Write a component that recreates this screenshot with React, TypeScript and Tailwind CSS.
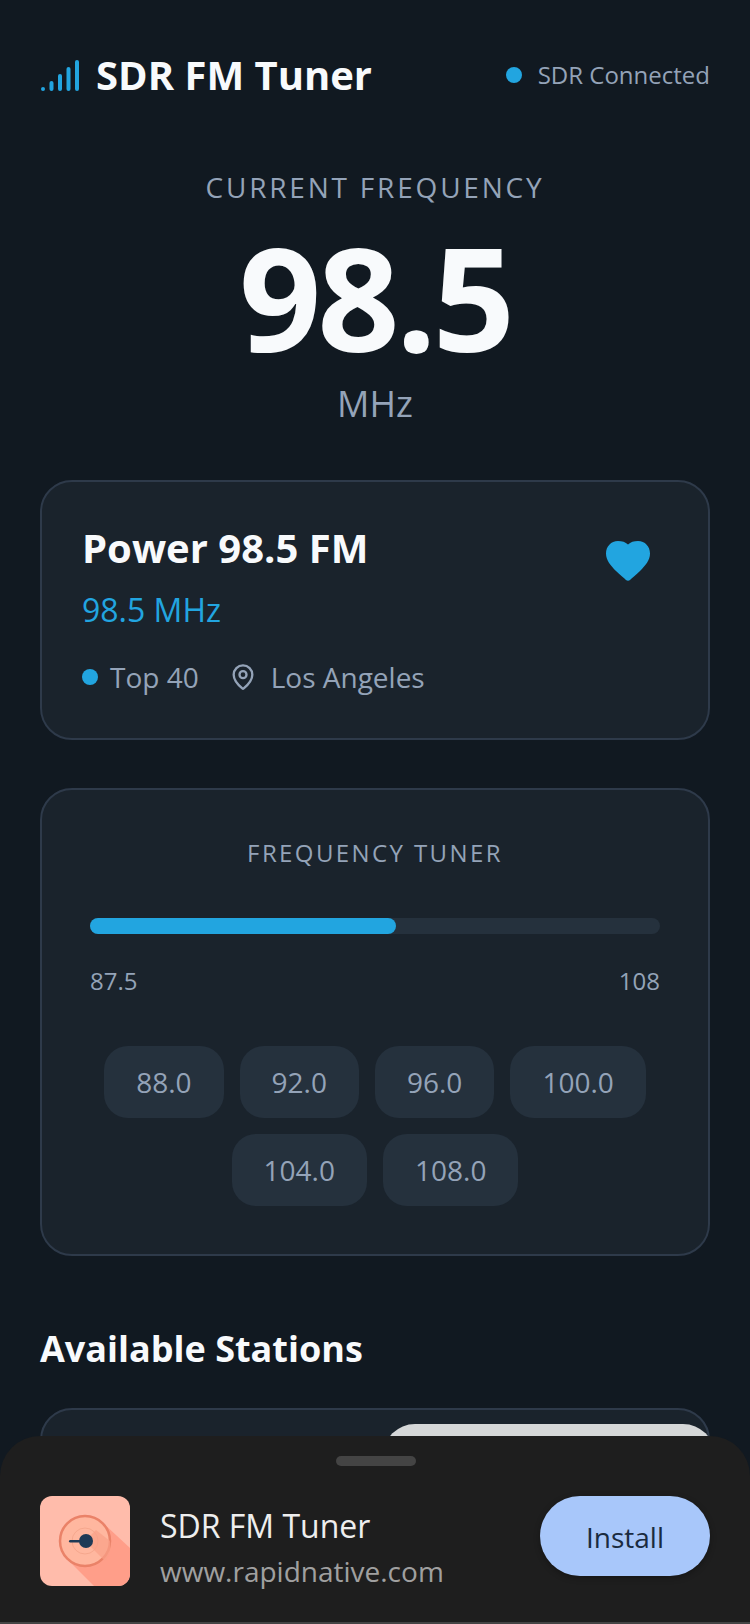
import { MapPin } from 'lucide-react'

const PRESETS_TOP = ['88.0', '92.0', '96.0', '100.0']
const PRESETS_BOTTOM = ['104.0', '108.0']

function SignalLogo() {
  return (
    <svg width="40" height="32" viewBox="0 0 40 32" className="shrink-0" fill="#22a5e0">
      <rect x="1" y="28" width="4" height="4" rx="2" />
      <rect x="9.5" y="22" width="4" height="10" rx="2" />
      <rect x="18" y="15" width="4" height="17" rx="2" />
      <rect x="26.5" y="8" width="4" height="24" rx="2" />
      <rect x="35" y="1" width="4" height="31" rx="2" />
    </svg>
  )
}

function Heart() {
  return (
    <svg width="44" height="40" viewBox="0 0 44 40" fill="#22a5e0">
      <path d="M22 3.5 C24.5 1 28 0 32 0 C39 0 44 5.5 44 12.5 C44 19 39.5 24.5 34 30 C30 34 26 37 24 39 C23 40 21 40 20 39 C18 37 14 34 10 30 C4.5 24.5 0 19 0 12.5 C0 5.5 5 0 12 0 C16 0 19.5 1 22 3.5 Z" />
    </svg>
  )
}

function AppIcon() {
  return (
    <svg width="90" height="90" viewBox="0 0 90 90" className="rounded-[12px] shrink-0">
      <rect width="90" height="90" fill="#ffbcab" />
      <path d="M27 63 L54 90 L90 90 L90 52 L63 27 Z" fill="#ff9e89" />
      <circle cx="45" cy="45" r="25" fill="#ffb79f" stroke="#ea8268" strokeWidth="2.5" />
      <circle cx="45" cy="45" r="13" fill="none" stroke="#f2a287" strokeWidth="0.75" />
      <path d="M45 45 L65 65 A 25 25 0 0 0 70 45 L56 34 Z" fill="#f9a088" opacity="0.7" />
      <circle cx="46" cy="45" r="7" fill="#1f3a56" />
      <rect x="29" y="44" width="12" height="2.5" rx="1.2" fill="#1f3a56" />
    </svg>
  )
}

function Preset({ label }: { label: string }) {
  return (
    <div className="h-[72px] px-[32px] flex items-center justify-center rounded-[24px] bg-[#25313d] text-[28px] text-[#94a3b8]">
      {label}
    </div>
  )
}

export default function App() {
  return (
    <div className="relative h-[1624px] w-[750px] overflow-hidden bg-[#111921] font-['Open_Sans',sans-serif]">
      <div className="px-10 pt-[47px]">
        <div className="flex items-center justify-between h-[56px]">
          <div className="flex items-center gap-4">
            <SignalLogo />
            <h1 className="text-[40px] leading-[56px] font-bold text-[#f8fafc]">SDR FM Tuner</h1>
          </div>
          <div className="flex items-center gap-4">
            <span className="w-4 h-4 rounded-full bg-[#22a5e0]" />
            <span className="text-[24px] text-[#94a3b8]">SDR Connected</span>
          </div>
        </div>

        <div className="mt-[64px] flex flex-col items-center">
          <p className="text-[28px] leading-[40px] tracking-[2.8px] text-[#94a3b8]">CURRENT FREQUENCY</p>
          <p className="mt-[9px] text-[144px] leading-[160px] font-bold text-[#f8fafc] tracking-[-4px]">98.5</p>
          <p className="mt-1 text-[36px] leading-[48px] text-[#94a3b8]">MHz</p>
        </div>

        <section className="mt-[52px] h-[260px] rounded-[32px] border-2 border-[#2e3a4a] bg-[#1a232c] px-10 pt-[38px] flex justify-between">
          <div>
            <h2 className="text-[40px] leading-[56px] font-bold text-[#f8fafc]">Power 98.5 FM</h2>
            <p className="mt-[12px] text-[32px] leading-[44px] text-[#22a5e0]">98.5 MHz</p>
            <div className="mt-[25px] flex items-center text-[28px] leading-[40px] text-[#94a3b8]">
              <span className="w-4 h-4 rounded-full bg-[#22a5e0]" />
              <span className="ml-3">Top 40</span>
              <MapPin size={28} strokeWidth={2} className="ml-[30px]" />
              <span className="ml-[14px]">Los Angeles</span>
            </div>
          </div>
          <div className="pt-[21px] pr-[18px]">
            <Heart />
          </div>
        </section>

        <section className="mt-[48px] h-[468px] rounded-[32px] border-2 border-[#2e3a4a] bg-[#1a232c] px-[48px] pt-[46px]">
          <p className="text-center text-[24px] leading-[34px] tracking-[2.4px] text-[#94a3b8]">FREQUENCY TUNER</p>
          <div className="mt-[48px] h-4 rounded-lg bg-[#25313d]">
            <div className="h-4 rounded-lg bg-[#22a5e0] w-[53.7%]" />
          </div>
          <div className="mt-[30px] flex justify-between text-[24px] leading-[34px] text-[#94a3b8]">
            <span>87.5</span>
            <span>108</span>
          </div>
          <div className="mt-[48px] flex flex-col items-center gap-4">
            <div className="flex gap-4">
              {PRESETS_TOP.map((p) => (
                <Preset key={p} label={p} />
              ))}
            </div>
            <div className="flex gap-4">
              {PRESETS_BOTTOM.map((p) => (
                <Preset key={p} label={p} />
              ))}
            </div>
          </div>
        </section>

        <h2 className="mt-[68px] text-[36px] leading-[50px] font-bold text-[#f8fafc]">Available Stations</h2>
        <div className="mt-[34px] h-[200px] rounded-[32px] border-2 border-[#2e3a4a] bg-[#1a232c]" />
      </div>

      {/* toast peeking out from behind the sheet */}
      <div className="absolute left-[383px] right-[35px] top-[1424px] h-[60px] rounded-t-[32px] bg-[#d5d7d8]" />

      <div className="absolute left-0 right-0 top-[1436px] h-[186px] rounded-t-[40px] bg-[#1e1e1e]">
        <div className="mx-auto mt-5 h-[10px] w-20 translate-x-px rounded-[5px] bg-[#444444]" />
        <div className="mt-[30px] px-10 flex items-start">
          <AppIcon />
          <div className="ml-[30px] flex-1 pt-2">
            <p className="text-[32px] leading-[44px] text-[#eeeeee]">SDR FM Tuner</p>
            <p className="mt-[3px] text-[28px] leading-[40px] text-[#a0a0a0]">www.rapidnative.com</p>
          </div>
          <div className="w-[170px] h-[80px] pt-[2px] rounded-[40px] bg-[#a8c7fa] flex items-center justify-center text-[28px] text-[#1a2b40] shadow-[0_2px_6px_rgba(0,0,0,0.3)]">
            Install
          </div>
        </div>
      </div>
      <div className="absolute left-0 right-0 bottom-0 h-[2px] bg-[#444444]" />
    </div>
  )
}
